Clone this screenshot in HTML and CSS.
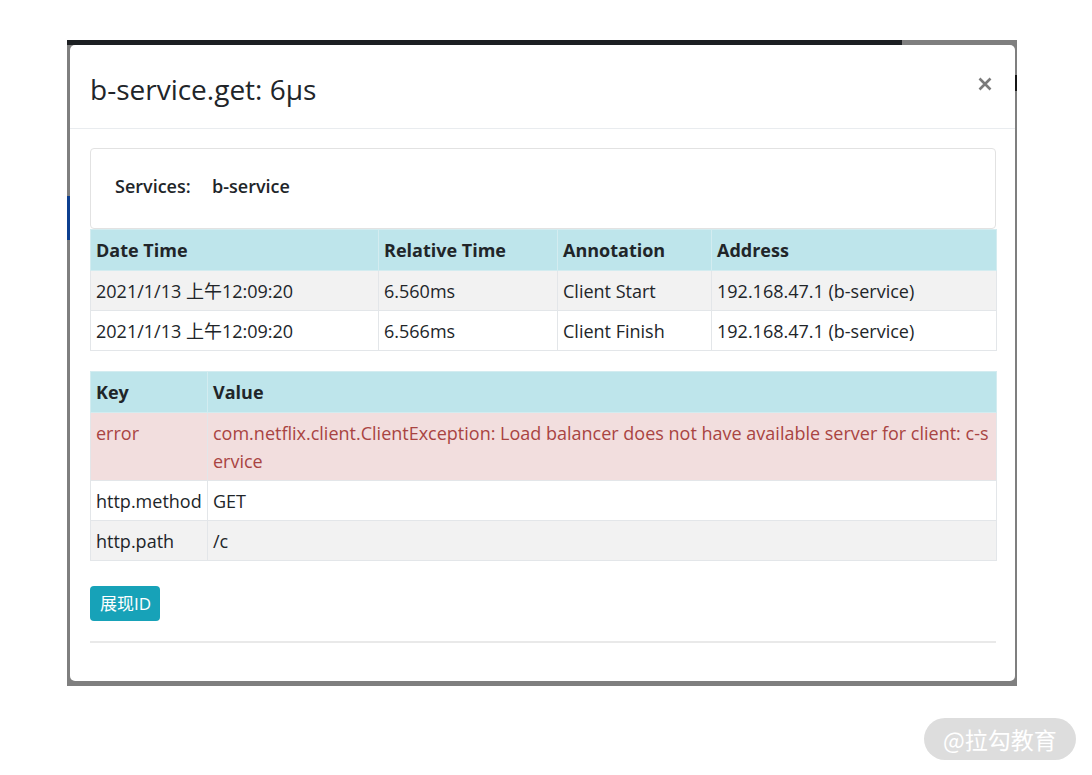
FILE: index.html
```html
<!DOCTYPE html>
<html lang="zh">
<head>
<meta charset="utf-8">
<title>b-service.get</title>
<link rel="stylesheet" href="styles.css">
</head>
<body>
<div class="shot">
  <div class="modal">
    <div class="modal-header">
      <h5 class="modal-title">b-service.get: 6µs</h5>
      <button class="close" aria-label="Close">
        <svg width="14" height="14" viewBox="0 0 14 14"><path d="M1.5 1.5 L12.5 12.5 M12.5 1.5 L1.5 12.5" stroke="#7b7b7b" stroke-width="2.6" stroke-linecap="butt"/></svg>
      </button>
    </div>
    <div class="modal-body">
      <div class="services">
        <span class="services-label">Services:</span>
        <span class="services-value">b-service</span>
      </div>
      <table class="tbl tbl-anno">
        <colgroup><col class="c1"><col class="c2"><col class="c3"><col class="c4"></colgroup>
        <thead>
          <tr class="info"><th>Date Time</th><th>Relative Time</th><th>Annotation</th><th>Address</th></tr>
        </thead>
        <tbody>
          <tr class="odd"><td>2021/1/13 上午12:09:20</td><td>6.560ms</td><td>Client Start</td><td>192.168.47.1 (b-service)</td></tr>
          <tr><td>2021/1/13 上午12:09:20</td><td>6.566ms</td><td>Client Finish</td><td>192.168.47.1 (b-service)</td></tr>
        </tbody>
      </table>
      <table class="tbl tbl-kv">
        <colgroup><col class="k"><col class="v"></colgroup>
        <thead>
          <tr class="info"><th>Key</th><th>Value</th></tr>
        </thead>
        <tbody>
          <tr class="danger"><td>error</td><td>com.netflix.client.ClientException: Load balancer does not have available server for client: c-service</td></tr>
          <tr><td>http.method</td><td>GET</td></tr>
          <tr class="odd"><td>http.path</td><td>/c</td></tr>
        </tbody>
      </table>
      <button class="btn-info">展现ID</button>
      <hr class="rule">
    </div>
  </div>
</div>
<div class="watermark">@拉勾教育</div>
</body>
</html>
```

FILE: styles.css
```css
html, body {
  margin: 0;
  padding: 0;
  background: #ffffff;
}
body {
  font-family: "Open Sans", "Noto Sans CJK SC", sans-serif;
  color: #212529;
}
.shot {
  margin: 40px 0 0 67px;
  width: 950px;
  height: 646px;
  box-sizing: border-box;
  padding: 5px 2px 5px 3px;
  background:
    linear-gradient(#1c1f22, #1c1f22) 0 0 / 835px 5px no-repeat,
    linear-gradient(#0d3f8f, #0d3f8f) 0 156px / 3px 44px no-repeat,
    linear-gradient(#151515, #151515) right 0 top 35px / 2px 16px no-repeat,
    #7f7f7f;
}
.modal {
  height: 636px;
  background: #fff;
  border-radius: 5px;
  box-sizing: border-box;
}
.modal-header {
  height: 84px;
  box-sizing: border-box;
  border-bottom: 1px solid #e9ecef;
  display: flex;
  align-items: center;
  justify-content: space-between;
  padding: 0 23px 0 20px;
}
.modal-title {
  margin: 0;
  padding-top: 5px;
  font-size: 28px;
  font-weight: 500;
  line-height: 32px;
  color: #212529;
}
.close {
  border: 0;
  background: none;
  padding: 0;
  margin: 0 0 6px 0;
  width: 14px;
  height: 14px;
  display: flex;
}
.modal-body {
  padding: 19px 19px 0 20px;
}
.services {
  height: 81px;
  box-sizing: border-box;
  border: 1px solid #e2e2e2;
  border-radius: 4px;
  display: flex;
  align-items: center;
  padding: 0 0 5px 24px;
  font-size: 18px;
  font-weight: 600;
}
.services-label {
  width: 97px;
}
.tbl {
  width: 906px;
  border-collapse: collapse;
  table-layout: fixed;
  font-size: 18px;
}
.tbl th, .tbl td {
  border: 1px solid #e3e6e9;
  text-align: left;
  vertical-align: top;
  line-height: 28px;
  padding: 6px 5px 5px 5px;
  word-break: break-all;
}
.tbl th {
  font-weight: 700;
  padding: 6px 5px 6px 5px;
}
.tbl tr.info th {
  background: #bee5eb;
  border-color: #d3ecf0;
}
.tbl tr.odd td {
  background: #f2f2f2;
}
.tbl tr.danger td {
  background: #f2dede;
  color: #a94442;
}
.c1 { width: 288px; }
.c2 { width: 179px; }
.c3 { width: 154px; }
.c4 { width: 285px; }
.k { width: 117px; }
.v { width: 789px; }
.tbl-kv {
  margin-top: 20px;
}
.btn-info {
  margin-top: 25px;
  display: block;
  height: 35px;
  padding: 0 9px 0 10px;
  border: 0;
  border-radius: 4px;
  background: #17a2b8;
  color: #fff;
  font-family: "Open Sans", "Noto Sans CJK SC", sans-serif;
  font-size: 17px;
  line-height: 35px;
}
.rule {
  margin: 20px 0 0 0;
  border: 0;
  border-top: 2px solid #e9e9e9;
  height: 0;
}
.watermark {
  margin: 32px 0 0 924px;
  width: 152px;
  height: 42px;
  border-radius: 21px;
  background: #dddddd;
  color: #ffffff;
  font-family: "Noto Sans CJK SC", sans-serif;
  font-size: 23px;
  line-height: 42px;
  text-align: center;
}
```
